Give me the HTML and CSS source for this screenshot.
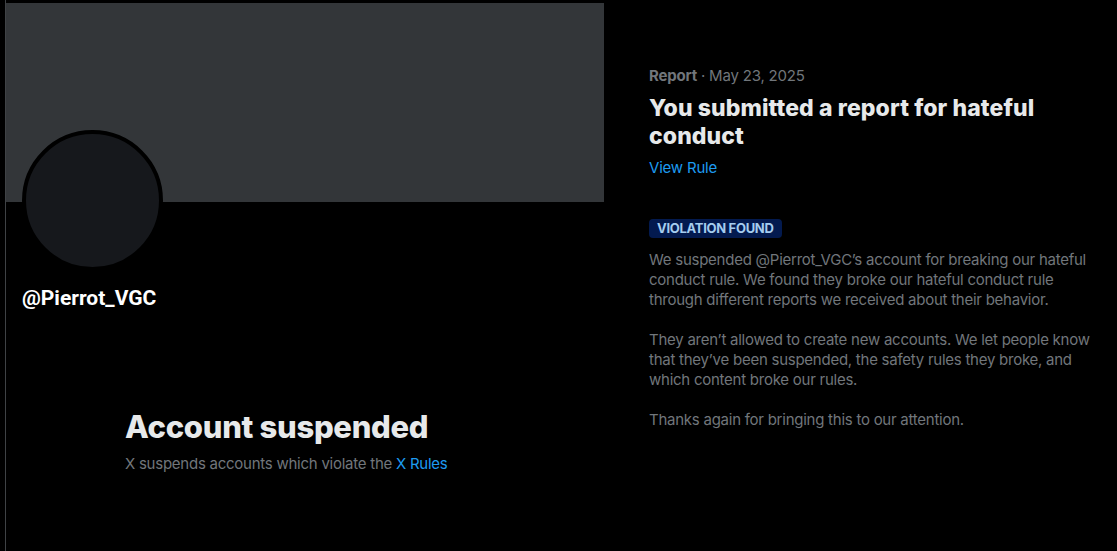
FILE: index.html
```html
<!DOCTYPE html>
<html lang="en">
<head>
<meta charset="utf-8">
<title>Account suspended</title>
<link rel="stylesheet" href="styles.css">
</head>
<body>
<div class="page">
  <section class="profile">
    <div class="banner"></div>
    <div class="avatar"></div>
    <div class="handle">@Pierrot_VGC</div>
    <div class="empty">
      <h2 class="empty-title">Account suspended</h2>
      <p class="empty-text">X suspends accounts which violate the <a class="link" href="#">X Rules</a></p>
    </div>
  </section>
  <section class="report">
    <div class="meta"><span class="meta-label">Report</span> · May 23, 2025</div>
    <h1 class="report-title">You submitted a report for hateful conduct</h1>
    <a class="link rule-link" href="#">View Rule</a>
    <div class="badge">VIOLATION FOUND</div>
    <p class="para">We suspended @Pierrot_VGC’s account for breaking our hateful conduct rule. We found they broke our hateful conduct rule through different reports we received about their behavior.</p>
    <p class="para">They aren’t allowed to create new accounts. We let people know that they’ve been suspended, the safety rules they broke, and which content broke our rules.</p>
    <p class="para">Thanks again for bringing this to our attention.</p>
  </section>
</div>
</body>
</html>
```

FILE: styles.css
```css
html, body {
  margin: 0;
  padding: 0;
  background: #000;
  height: 100%;
}
body {
  font-family: Inter, "Noto Sans", "Liberation Sans", sans-serif;
  color: #e7e9ea;
  overflow: hidden;
}
.page {
  display: flex;
  height: 100%;
}
.profile {
  margin-left: 5px;
  border-left: 1px solid #3f4245;
  width: 598px;
  padding-top: 3px;
  display: flex;
  flex-direction: column;
  flex-shrink: 0;
}
.banner {
  height: 199px;
  background: #333639;
}
.avatar {
  width: 133px;
  height: 133px;
  margin-top: -72px;
  margin-left: 16px;
  border: 4px solid #000;
  border-radius: 50%;
  background: #16181c;
}
.handle {
  margin: 15px 0 0 16px;
  font-family: Roboto, "Liberation Sans", sans-serif;
  font-weight: 700;
  font-size: 21px;
  line-height: 25px;
  color: #fff;
}
.empty {
  width: 360px;
  margin: 98px auto 0;
}
.empty-title {
  margin: 0;
  font-size: 31px;
  line-height: 36px;
  font-weight: 800;
  color: #e7e9ea;
  letter-spacing: -0.3px;
}
.empty-text {
  margin: 9px 0 0;
  font-size: 15px;
  line-height: 20px;
  color: #71767b;
  letter-spacing: -0.25px;
}
.link {
  color: #1d9bf0;
  text-decoration: none;
}
.report {
  margin-left: 45px;
  padding-top: 66px;
  width: 450px;
  display: flex;
  flex-direction: column;
  align-items: flex-start;
}
.meta {
  font-size: 15px;
  line-height: 20px;
  color: #71767b;
  letter-spacing: -0.2px;
}
.meta-label {
  font-weight: 700;
}
.report-title {
  margin: 8px 0 0;
  font-size: 23px;
  line-height: 28px;
  font-weight: 800;
  color: #e7e9ea;
  letter-spacing: 0.1px;
}
.rule-link {
  margin-top: 8px;
  font-size: 15px;
  line-height: 20px;
  letter-spacing: -0.2px;
}
.badge {
  margin-top: 41px;
  background: #031a4f;
  color: #a5cdef;
  font-size: 13px;
  font-weight: 700;
  line-height: 19px;
  padding: 0 8px;
  border-radius: 4px;
  letter-spacing: -0.3px;
}
.para {
  margin: 0;
  font-size: 15px;
  line-height: 20px;
  color: #71767b;
  letter-spacing: -0.25px;
}
.badge + .para {
  margin-top: 12px;
}
.para + .para {
  margin-top: 20px;
}
```
